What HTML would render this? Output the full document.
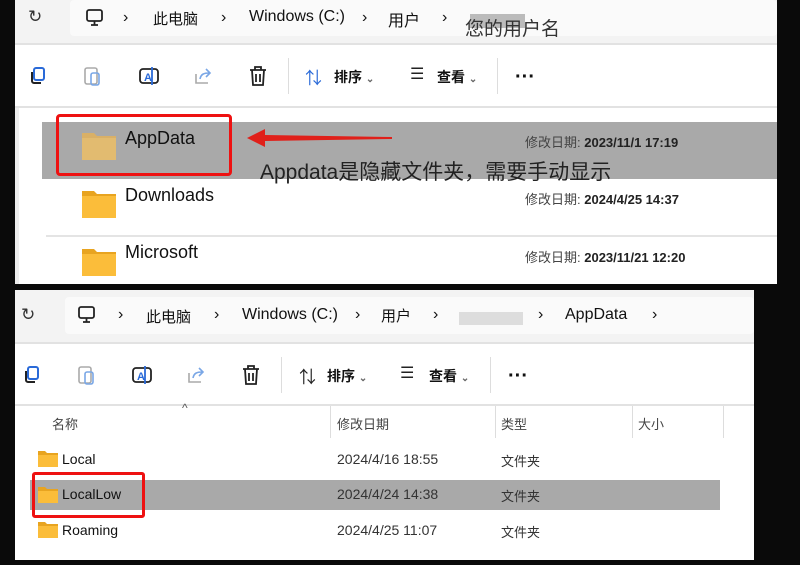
<!DOCTYPE html>
<html><head><meta charset="utf-8"><style>
*{margin:0;padding:0;box-sizing:border-box}
body{width:800px;height:565px;background:#0a0a0a;position:relative;overflow:hidden;font-family:"Liberation Sans","Noto Sans CJK SC",sans-serif;color:#111}
.a{position:absolute}
.panel{position:absolute;background:#fff;overflow:hidden}
.t{position:absolute;white-space:nowrap}
.fold{position:absolute}
</style></head><body>

<!-- TOP PANEL -->
<div class="panel" style="left:15px;top:0;width:762px;height:284px">
  <div class="a" style="left:0;top:0;width:762px;height:43px;background:#f3f3f3"></div>
  <div class="a" style="left:55px;top:0;width:707px;height:36px;background:#fafafa;border-radius:4px"></div>
  <div class="a" style="left:0;top:43px;width:762px;height:2px;background:#e2e2e2"></div>
  <div class="t" style="left:13px;top:7px;font-size:17px;color:#333">↻</div>
  <svg class="a" style="left:70px;top:8px" width="20" height="20" viewBox="0 0 20 20"><rect x="2" y="2" width="15" height="11" rx="2" fill="none" stroke="#222" stroke-width="1.8"/><path d="M6 17h7M9.5 13v4" stroke="#222" stroke-width="1.8"/></svg>
  <div class="t" style="left:108px;top:9px;font-size:16px">›</div>
  <div class="t" style="left:138px;top:8px;font-size:15px">此电脑</div>
  <div class="t" style="left:206px;top:9px;font-size:16px">›</div>
  <div class="t" style="left:234px;top:8px;font-size:16px">Windows (C:)</div>
  <div class="t" style="left:347px;top:9px;font-size:16px">›</div>
  <div class="t" style="left:373px;top:7px;font-size:16px">用户</div>
  <div class="t" style="left:427px;top:9px;font-size:16px">›</div>
  <div class="a" style="left:455px;top:14px;width:55px;height:14px;background:#bbb"></div>
  <div class="t" style="left:450px;top:14px;font-size:19px;color:#333">您的用户名</div>

  <svg class="a" style="left:12px;top:65px" width="22" height="22" viewBox="0 0 22 22"><rect x="7" y="3" width="10" height="12" rx="2" fill="none" stroke="#2a6ad8" stroke-width="2"/><path d="M5 7v9a2 2 0 0 0 2 2h7" fill="none" stroke="#222" stroke-width="2"/></svg>
  <svg class="a" style="left:67px;top:64px" width="22" height="24" viewBox="0 0 22 24"><rect x="3" y="4" width="12" height="16" rx="2" fill="none" stroke="#aaa" stroke-width="1.6"/><rect x="9" y="9" width="8" height="12" rx="2" fill="none" stroke="#7aa7e6" stroke-width="1.6"/></svg>
  <svg class="a" style="left:122px;top:64px" width="24" height="24" viewBox="0 0 24 24"><rect x="3" y="5" width="18" height="14" rx="3" fill="none" stroke="#222" stroke-width="1.8"/><text x="7" y="17" font-size="11" font-weight="bold" fill="#2a6ad8" font-family="Liberation Sans">A</text><path d="M15 3v18" stroke="#2a6ad8" stroke-width="1.8"/></svg>
  <svg class="a" style="left:177px;top:65px" width="22" height="22" viewBox="0 0 22 22"><path d="M4 9v9h12" fill="none" stroke="#aaa" stroke-width="1.6"/><path d="M8 14c1-5 4-6 9-6M14 4l4 4-4 4" fill="none" stroke="#7aa7e6" stroke-width="1.6"/></svg>
  <svg class="a" style="left:232px;top:64px" width="22" height="24" viewBox="0 0 22 24"><path d="M3 6h16M8 6V3h6v3M5 6l1 15h10l1-15M9 10v8M13 10v8" fill="none" stroke="#222" stroke-width="1.8"/></svg>
  <div class="a" style="left:273px;top:58px;width:1px;height:36px;background:#ddd"></div>
  <div class="t" style="left:290px;top:64px;font-size:17px;color:#2a6ad8">⇅</div>
  <div class="t" style="left:319px;top:67px;font-size:14px;font-weight:bold">排序 <span style="font-size:10px;color:#666">⌄</span></div>
  <div class="t" style="left:395px;top:64px;font-size:16px;color:#222">☰</div>
  <div class="t" style="left:422px;top:67px;font-size:14px;font-weight:bold">查看 <span style="font-size:10px;color:#666">⌄</span></div>
  <div class="a" style="left:482px;top:58px;width:1px;height:36px;background:#ddd"></div>
  <div class="t" style="left:500px;top:66px;font-size:20px;font-weight:bold">···</div>
  <div class="a" style="left:0;top:106px;width:762px;height:2px;background:#e2e2e2"></div>
  <div class="a" style="left:0;top:108px;width:4px;height:176px;background:#eee"></div>

  <div class="a" style="left:27px;top:122px;width:735px;height:57px;background:#a9a9a9"></div>
  <div class="a" style="left:41px;top:114px;width:176px;height:62px;border:3px solid #e11;border-radius:4px"></div>
  <svg class="fold" style="left:67px;top:130px" width="34" height="30" viewBox="0 0 34 30"><path d="M0 3h12l3 3h19v24H0z" fill="#d9b067"/><rect x="0" y="8" width="34" height="22" fill="#e2bb70"/></svg>
  <div class="t" style="left:110px;top:128px;font-size:18px">AppData</div>
  <svg class="a" style="left:232px;top:129px" width="145" height="18" viewBox="0 0 145 18"><path d="M0 9L18 0v6l127 2v2L18 12v6z" fill="#e0201a"/></svg>
  <div class="t" style="left:245px;top:156px;font-size:21px;color:#222">Appdata是隐藏文件夹，需要手动显示</div>
  <div class="t" style="left:510px;top:132px;font-size:13px;color:#444">修改日期: <b style="color:#222">2023/11/1 17:19</b></div>

  <svg class="fold" style="left:67px;top:188px" width="34" height="30" viewBox="0 0 34 30"><path d="M0 3h12l3 3h19v24H0z" fill="#e8a420"/><rect x="0" y="8" width="34" height="22" fill="#fbbd3a"/></svg>
  <div class="t" style="left:110px;top:185px;font-size:18px">Downloads</div>
  <div class="t" style="left:510px;top:189px;font-size:13px;color:#444">修改日期: <b style="color:#222">2024/4/25 14:37</b></div>
  <div class="a" style="left:31px;top:235px;width:731px;height:2px;background:#e4e4e4"></div>
  <svg class="fold" style="left:67px;top:246px" width="34" height="30" viewBox="0 0 34 30"><path d="M0 3h12l3 3h19v24H0z" fill="#e8a420"/><rect x="0" y="8" width="34" height="22" fill="#fbbd3a"/></svg>
  <div class="t" style="left:110px;top:242px;font-size:18px">Microsoft</div>
  <div class="t" style="left:510px;top:247px;font-size:13px;color:#444">修改日期: <b style="color:#222">2023/11/21 12:20</b></div>
</div>

<!-- BOTTOM PANEL -->
<div class="panel" style="left:15px;top:290px;width:739px;height:270px">
  <div class="a" style="left:0;top:0;width:739px;height:52px;background:#f3f3f3"></div>
  <div class="a" style="left:50px;top:7px;width:689px;height:37px;background:#fafafa;border-radius:4px"></div>
  <div class="a" style="left:0;top:52px;width:739px;height:2px;background:#e2e2e2"></div>
  <div class="t" style="left:6px;top:15px;font-size:17px;color:#333">↻</div>
  <svg class="a" style="left:62px;top:15px" width="20" height="20" viewBox="0 0 20 20"><rect x="2" y="2" width="15" height="11" rx="2" fill="none" stroke="#222" stroke-width="1.8"/><path d="M6 17h7M9.5 13v4" stroke="#222" stroke-width="1.8"/></svg>
  <div class="t" style="left:103px;top:16px;font-size:16px">›</div>
  <div class="t" style="left:131px;top:16px;font-size:15px">此电脑</div>
  <div class="t" style="left:199px;top:16px;font-size:16px">›</div>
  <div class="t" style="left:227px;top:16px;font-size:16px">Windows (C:)</div>
  <div class="t" style="left:340px;top:16px;font-size:16px">›</div>
  <div class="t" style="left:366px;top:15px;font-size:15px">用户</div>
  <div class="t" style="left:418px;top:16px;font-size:16px">›</div>
  <div class="a" style="left:444px;top:22px;width:64px;height:13px;background:#ddd"></div>
  <div class="t" style="left:523px;top:16px;font-size:16px">›</div>
  <div class="t" style="left:550px;top:16px;font-size:16px">AppData</div>
  <div class="t" style="left:637px;top:16px;font-size:16px">›</div>

  <svg class="a" style="left:6px;top:74px" width="22" height="22" viewBox="0 0 22 22"><rect x="7" y="3" width="10" height="12" rx="2" fill="none" stroke="#2a6ad8" stroke-width="2"/><path d="M5 7v9a2 2 0 0 0 2 2h7" fill="none" stroke="#222" stroke-width="2"/></svg>
  <svg class="a" style="left:61px;top:73px" width="22" height="24" viewBox="0 0 22 24"><rect x="3" y="4" width="12" height="16" rx="2" fill="none" stroke="#aaa" stroke-width="1.6"/><rect x="9" y="9" width="8" height="12" rx="2" fill="none" stroke="#7aa7e6" stroke-width="1.6"/></svg>
  <svg class="a" style="left:115px;top:73px" width="24" height="24" viewBox="0 0 24 24"><rect x="3" y="5" width="18" height="14" rx="3" fill="none" stroke="#222" stroke-width="1.8"/><text x="7" y="17" font-size="11" font-weight="bold" fill="#2a6ad8" font-family="Liberation Sans">A</text><path d="M15 3v18" stroke="#2a6ad8" stroke-width="1.8"/></svg>
  <svg class="a" style="left:170px;top:74px" width="22" height="22" viewBox="0 0 22 22"><path d="M4 9v9h12" fill="none" stroke="#aaa" stroke-width="1.6"/><path d="M8 14c1-5 4-6 9-6M14 4l4 4-4 4" fill="none" stroke="#7aa7e6" stroke-width="1.6"/></svg>
  <svg class="a" style="left:225px;top:73px" width="22" height="24" viewBox="0 0 22 24"><path d="M3 6h16M8 6V3h6v3M5 6l1 15h10l1-15M9 10v8M13 10v8" fill="none" stroke="#222" stroke-width="1.8"/></svg>
  <div class="a" style="left:266px;top:67px;width:1px;height:36px;background:#ddd"></div>
  <div class="t" style="left:284px;top:73px;font-size:17px;color:#222">⇅</div>
  <div class="t" style="left:312px;top:76px;font-size:14px;font-weight:bold">排序 <span style="font-size:10px;color:#666">⌄</span></div>
  <div class="t" style="left:385px;top:73px;font-size:16px;color:#222">☰</div>
  <div class="t" style="left:414px;top:76px;font-size:14px;font-weight:bold">查看 <span style="font-size:10px;color:#666">⌄</span></div>
  <div class="a" style="left:475px;top:67px;width:1px;height:36px;background:#ddd"></div>
  <div class="t" style="left:493px;top:75px;font-size:20px;font-weight:bold">···</div>
  <div class="a" style="left:0;top:114px;width:739px;height:2px;background:#e2e2e2"></div>

  <div class="t" style="left:167px;top:111px;font-size:12px;color:#555">^</div>
  <div class="t" style="left:37px;top:124px;font-size:13px;color:#444">名称</div>
  <div class="a" style="left:315px;top:116px;width:1px;height:32px;background:#ddd"></div>
  <div class="t" style="left:322px;top:124px;font-size:13px;color:#444">修改日期</div>
  <div class="a" style="left:480px;top:116px;width:1px;height:32px;background:#ddd"></div>
  <div class="t" style="left:486px;top:124px;font-size:13px;color:#444">类型</div>
  <div class="a" style="left:617px;top:116px;width:1px;height:32px;background:#ddd"></div>
  <div class="t" style="left:623px;top:124px;font-size:13px;color:#444">大小</div>
  <div class="a" style="left:708px;top:116px;width:1px;height:32px;background:#ddd"></div>

  <svg class="fold" style="left:23px;top:160px" width="20" height="17" viewBox="0 0 20 17"><path d="M0 1h7l2 2h11v14H0z" fill="#e8a420"/><rect x="0" y="5" width="20" height="12" fill="#fbbd3a"/></svg>
  <div class="t" style="left:47px;top:161px;font-size:14px">Local</div>
  <div class="t" style="left:322px;top:161px;font-size:14px;color:#333">2024/4/16 18:55</div>
  <div class="t" style="left:486px;top:161px;font-size:13px;color:#333">文件夹</div>

  <div class="a" style="left:15px;top:190px;width:690px;height:30px;background:#a9a9a9"></div>
  <div class="a" style="left:17px;top:182px;width:113px;height:46px;border:3px solid #e11;border-radius:3px"></div>
  <svg class="fold" style="left:23px;top:196px" width="20" height="17" viewBox="0 0 20 17"><path d="M0 1h7l2 2h11v14H0z" fill="#e8a420"/><rect x="0" y="5" width="20" height="12" fill="#fbbd3a"/></svg>
  <div class="t" style="left:47px;top:196px;font-size:14px">LocalLow</div>
  <div class="t" style="left:322px;top:196px;font-size:14px;color:#333">2024/4/24 14:38</div>
  <div class="t" style="left:486px;top:196px;font-size:13px;color:#333">文件夹</div>

  <svg class="fold" style="left:23px;top:231px" width="20" height="17" viewBox="0 0 20 17"><path d="M0 1h7l2 2h11v14H0z" fill="#e8a420"/><rect x="0" y="5" width="20" height="12" fill="#fbbd3a"/></svg>
  <div class="t" style="left:47px;top:232px;font-size:14px">Roaming</div>
  <div class="t" style="left:322px;top:232px;font-size:14px;color:#333">2024/4/25 11:07</div>
  <div class="t" style="left:486px;top:232px;font-size:13px;color:#333">文件夹</div>
</div>
</body></html>
